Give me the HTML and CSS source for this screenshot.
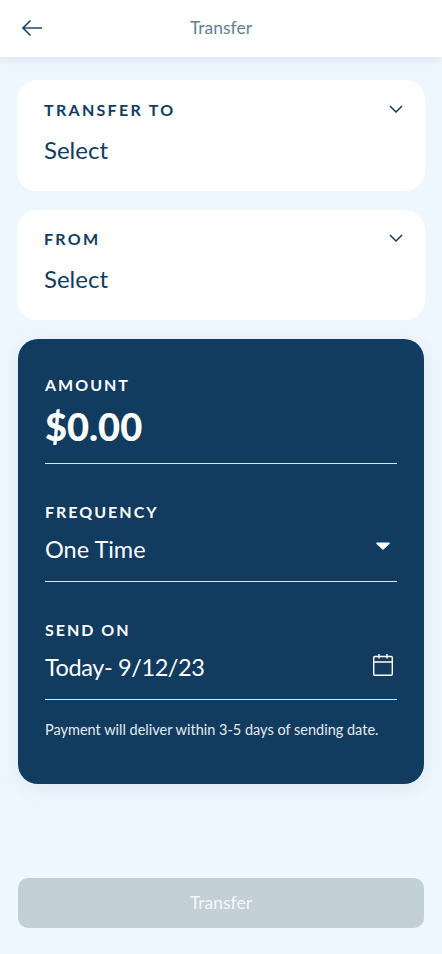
FILE: index.html
```html
<!DOCTYPE html>
<html lang="en">

<head>
    <meta charset="UTF-8">
    <meta name="viewport" content="width=device-width, initial-scale=1.0">
    <title>Transfer</title>
    <link rel="stylesheet" href="styles.css">
</head>

<body>
    <div class="page">
        <div class="header">
            <svg class="back-icon" width="22" height="18" viewBox="0 0 22 18" fill="none" stroke="#1f4a6e" stroke-width="1.700">
                <path d="M21 9H2M9.500 1.500L2 9l7.500 7.500" />
            </svg>
            <div class="header-title">Transfer</div>
        </div>

        <div class="select-card">
            <div class="select-top">
                <div class="select-label">TRANSFER TO</div>
                <svg width="14" height="8" viewBox="0 0 14 8" fill="none" stroke="#123c60" stroke-width="1.500">
                    <path d="M1 1l6 6 6-6" />
                </svg>
            </div>
            <div class="select-value">Select</div>
        </div>

        <div class="select-card select-card-from">
            <div class="select-top">
                <div class="select-label">FROM</div>
                <svg width="14" height="8" viewBox="0 0 14 8" fill="none" stroke="#123c60" stroke-width="1.500">
                    <path d="M1 1l6 6 6-6" />
                </svg>
            </div>
            <div class="select-value">Select</div>
        </div>

        <div class="form-card">
            <div class="field field-amount">
                <div class="field-label">AMOUNT</div>
                <div class="amount">$0.00</div>
            </div>
            <div class="field">
                <div class="field-label">FREQUENCY</div>
                <div class="field-row">
                    <span class="field-value">One Time</span>
                    <svg class="caret-icon" width="14" height="8" viewBox="0 0 14 8" fill="#ffffff">
                        <path d="M1 0.500h12a0.800 0.800 0 0 1 0.600 1.300L7.600 7.500a0.800 0.800 0 0 1-1.200 0L0.400 1.800A0.800 0.800 0 0 1 1 0.500z" />
                    </svg>
                </div>
            </div>
            <div class="field field-last">
                <div class="field-label">SEND ON</div>
                <div class="field-row">
                    <span class="field-value field-date">Today- 9/12/23</span>
                    <svg class="calendar-icon" width="20" height="22" viewBox="0 0 20 22" fill="none" stroke="#ffffff" stroke-width="1.400">
                        <rect x="0.700" y="2.500" width="18.600" height="18.800" rx="1.200" />
                        <path d="M0.700 8h18.600M6 0v4.500M14 0v4.500" />
                    </svg>
                </div>
            </div>
            <p class="form-note">Payment will deliver within 3-5 days of sending date.</p>
        </div>

        <div class="button-wrap">
            <button class="transfer-button">Transfer</button>
        </div>
    </div>
</body>

</html>
```

FILE: styles.css
```css
/* Transfer screen */
body {
    margin: 0;
    background-color: #eef6fe;
    font-family: "Lato", "Noto Sans", sans-serif;
    color: #123c60;
}

.page {
    display: flex;
    flex-direction: column;
    height: 954px;
    box-sizing: border-box;
    padding-bottom: 26px;
}

.header {
    display: flex;
    align-items: center;
    justify-content: center;
    position: relative;
    flex: none;
    height: 57px;
    margin-bottom: 23px;
    background-color: #ffffff;
    box-shadow: 0 3px 10px rgba(18, 60, 96, 0.08);
}

.back-icon {
    position: absolute;
    left: 21px;
    top: 19px;
}

.header-title {
    margin-top: -2px;
    font-size: 17.500px;
    color: #5f7f97;
}

.select-card {
    flex: none;
    box-sizing: border-box;
    height: 111px;
    margin: 0 17px 19px;
    padding: 20px 22px 0 27px;
    background-color: #ffffff;
    border-radius: 20px;
}

.select-card-from {
    height: 110px;
    padding-top: 19px;
}

.select-top {
    display: flex;
    align-items: center;
    justify-content: space-between;
    height: 18px;
}

.select-label {
    font-size: 16px;
    font-weight: 700;
    letter-spacing: 2.300px;
}

.select-value {
    margin-top: 17px;
    font-size: 24px;
    line-height: 30px;
}

.form-card {
    flex: none;
    box-sizing: border-box;
    height: 445px;
    margin: 0 18px;
    padding: 36px 27px 0;
    background-color: #113b5f;
    border-radius: 20px;
    box-shadow: 0 4px 20px rgba(18, 60, 96, 0.07);
    color: #ffffff;
}

.field {
    height: 79px;
    margin-bottom: 38px;
    border-bottom: 1px solid #d9e2ea;
}

.field-amount {
    height: 88px;
}

.field-last {
    margin-bottom: 20px;
}

.field-label {
    font-size: 16px;
    font-weight: 700;
    line-height: 20px;
    letter-spacing: 2px;
}

.amount {
    margin-top: 8px;
    font-size: 38px;
    font-weight: 900;
    line-height: 46px;
}

.field-row {
    display: flex;
    align-items: center;
    justify-content: space-between;
    height: 30px;
    margin-top: 12px;
}

.field-value {
    font-size: 23.500px;
}

.field-date {
    letter-spacing: -0.400px;
}

.caret-icon {
    margin-top: -6px;
    margin-right: 7px;
}

.calendar-icon {
    margin-top: -5px;
    margin-right: 4px;
}

.form-note {
    margin: 0;
    font-size: 14.500px;
    line-height: 20px;
    color: #e4ebf1;
}

.button-wrap {
    margin-top: auto;
    padding: 0 18px;
}

.transfer-button {
    display: block;
    width: 100%;
    height: 50px;
    padding: 0 0 2px;
    border: none;
    border-radius: 10px;
    background-color: #c3d0d5;
    color: #f4f8fa;
    font-family: inherit;
    font-size: 17.500px;
}
```
